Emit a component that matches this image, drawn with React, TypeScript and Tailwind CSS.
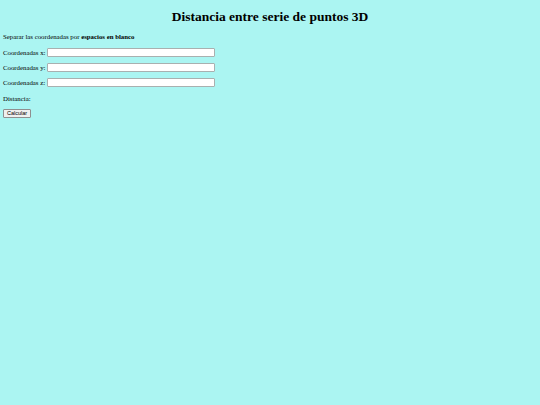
export default function App() {
    return (
        <div className="min-h-[405px] w-full bg-[#abf5f2] text-black px-[3px] pt-[9px]" style={{ fontFamily: '"Liberation Serif", "Times New Roman", serif' }}>
            <h1 className="text-center text-[13.5px] font-bold leading-[15px] mb-[9px]">Distancia entre serie de puntos 3D</h1>
            <p className="text-[6.8px] leading-[8px] mb-[7px]">Separar las coordenadas por <b>espacios en blanco</b></p>
            {["x", "y", "z"].map(c => (
                <div key={c} className="flex items-center text-[6.8px] leading-[8px] mb-[6px]">
                    <span>Coordenadas {c}:</span>
                    <input type="text" className="ml-[2px] w-[168px] h-[9px] bg-white border border-[#a9b0b0] rounded-[1px] outline-none" />
                </div>
            ))}
            <p className="text-[6.8px] leading-[8px] mt-[8px] mb-[6px]">Distancia:</p>
            <button className="w-[28px] h-[9px] text-[5.5px] leading-[7px] bg-[#efefef] border border-[#8f8f8f] rounded-[1px] flex items-center justify-center" style={{ fontFamily: '"Liberation Sans", Arial, sans-serif' }}>Calcular</button>
        </div>
    );
}
